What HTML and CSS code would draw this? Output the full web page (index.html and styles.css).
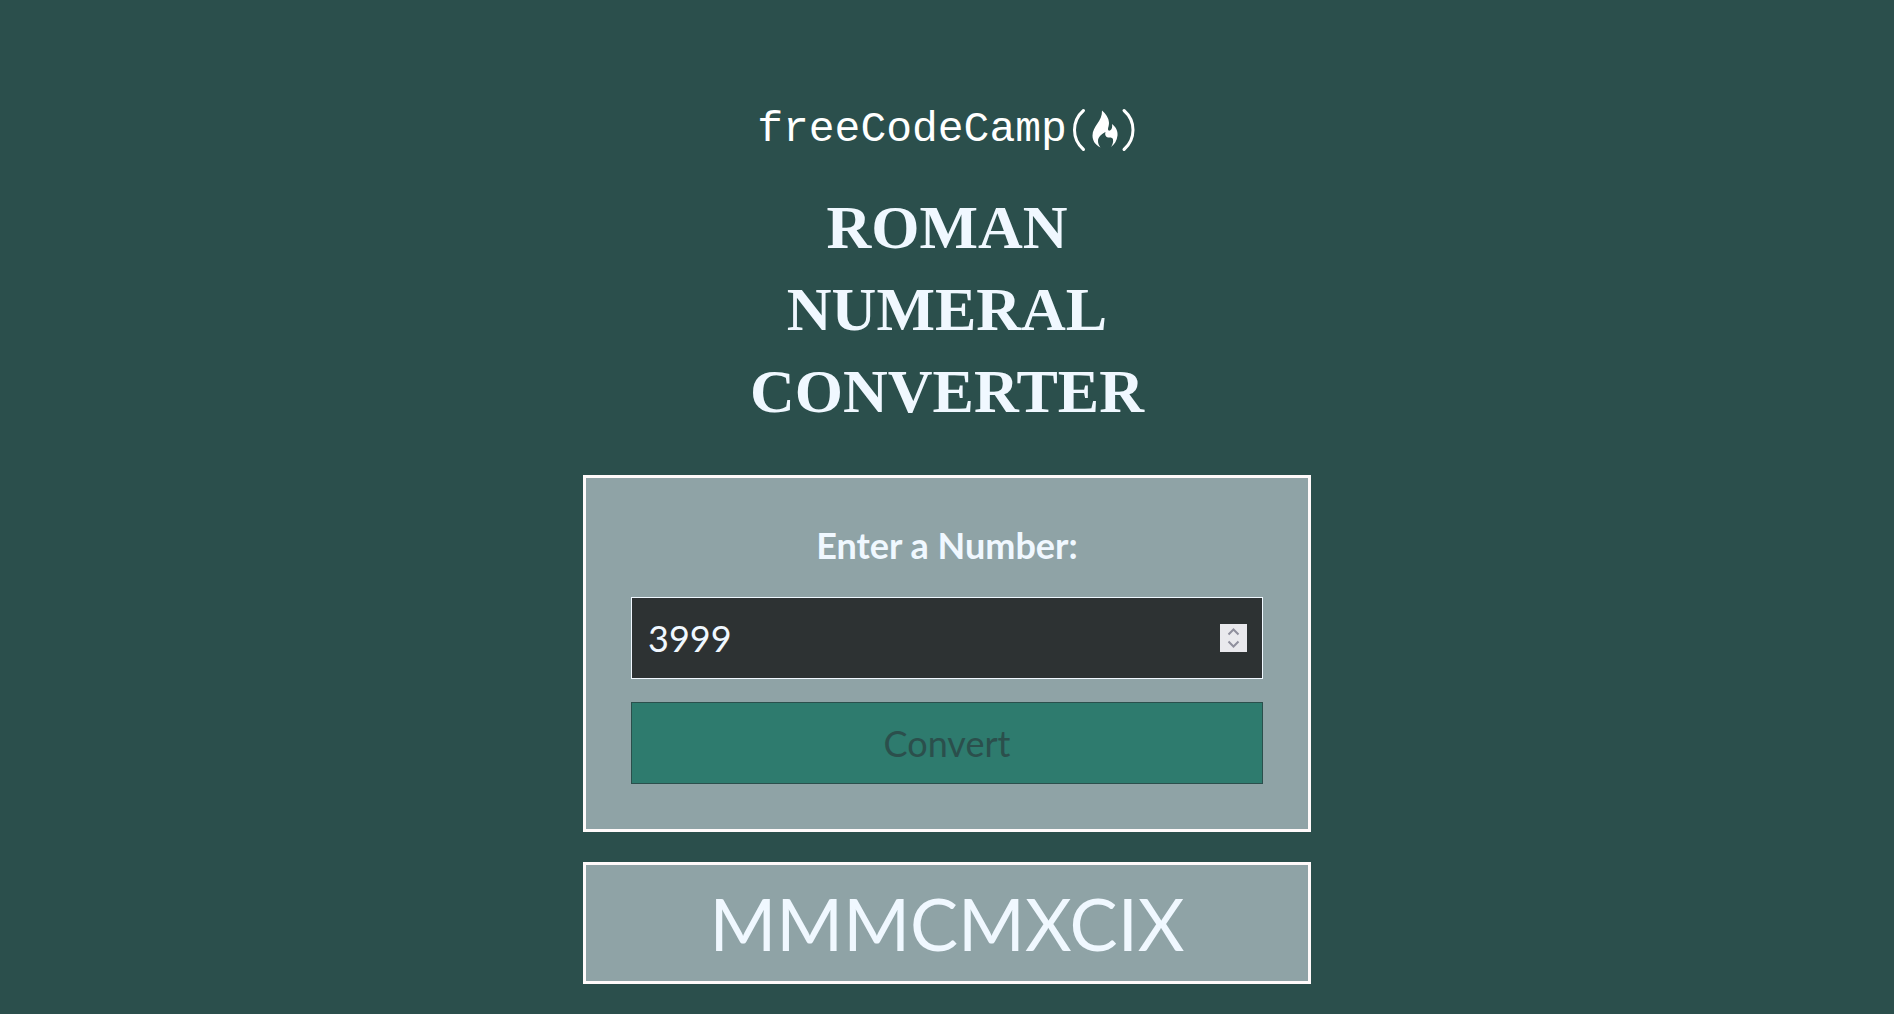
FILE: index.html
```html
<!DOCTYPE html>
<html lang="en">
<head>
<meta charset="utf-8">
<meta name="viewport" content="width=device-width, initial-scale=1">
<title>Roman Numeral Converter</title>
<link rel="stylesheet" href="styles.css">
</head>
<body>
<main class="page">
  <div class="logo">
    <span class="logo-text">freeCodeCamp</span>
    <svg class="logo-mark" viewBox="0 0 66 46" aria-hidden="true">
      <path class="bracket" d="M12.500 3.500C.5 14 .5 32 12.500 42.500M53 3.500c12 10.500 12 28.500 0 39"/>
      <path class="flame" d="M31 3.500c3.500 3 7 7.500 7 12.500 0 2.500-1 4.500-1 6 0 1.300.8 2 2 1.500 2-.8 2.500-3.500 2-6.500 4 3 6 7 5.500 11.500-.5 5-3 9-6.500 11.500 1.500-2.500 2.500-5 2-7.500-.3-1.500-1.500-2-3.500-2-3.500 0-5-2-4-5.500-4 2-7.500 5-7.500 9 0 2.500 1 4.500 2.500 6.500-5-2.500-8-6.500-8-12 0-9.500 10-14 9.500-25z"/>
    </svg>
  </div>
  <h1 class="title">Roman<br>Numeral<br>Converter</h1>
  <form class="panel form">
    <label class="label" for="number">Enter a Number:</label>
    <div class="field">
      <input class="control number" id="number" type="number" value="3999">
      <span class="stepper" aria-hidden="true">
        <svg class="arrows" viewBox="0 0 27 28"><path d="M8.500 10.500l5-5 5 5M8.500 17.500l5 5 5-5"/></svg>
      </span>
    </div>
    <button class="control convert" type="button">Convert</button>
  </form>
  <output class="panel result" for="number">MMMCMXCIX</output>
</main>
</body>
</html>
```
FILE: styles.css
```css
* {
  box-sizing: border-box;
}

body {
  margin: 0;
  background: #2b4f4c;
  color: #f0f8ff;
  font-family: Lato, sans-serif;
  font-size: 36px;
  line-height: 44px;
}

.page {
  display: flex;
  flex-direction: column;
  align-items: center;
  padding: 102px 20px 30px;
}

.logo {
  display: flex;
  align-items: center;
  gap: 4px;
  height: 56px;
  color: #fff;
}

.logo-text {
  font-family: "Liberation Mono", monospace;
  font-size: 43px;
}

.logo-mark {
  width: 66px;
  height: 46px;
}

.bracket {
  fill: none;
  stroke: currentColor;
  stroke-width: 3;
  stroke-linecap: round;
}

.flame {
  fill: currentColor;
}

.title {
  margin: 28px 0 43px;
  font-family: "Liberation Serif", serif;
  font-size: 62px;
  line-height: 82px;
  text-align: center;
  text-transform: uppercase;
}

.panel {
  width: 100%;
  max-width: 728px;
  border: 3px solid #fffafa;
  background: #8fa3a6;
  text-align: center;
}

.form {
  display: flex;
  flex-direction: column;
  margin-bottom: 30px;
  padding: 45px;
}

.label {
  margin-bottom: 30px;
  font-weight: 700;
}

.field {
  position: relative;
  display: flex;
  margin-bottom: 23px;
}

.control {
  width: 100%;
  height: 82px;
  border: 1px solid #f0f8ff;
  border-radius: 0;
  padding: 16px;
  font: inherit;
}

.number {
  background: #2d3233;
  color: #f0f8ff;
  appearance: textfield;
}

.number::-webkit-inner-spin-button {
  appearance: none;
}

.stepper {
  position: absolute;
  top: 27px;
  right: 16px;
  display: flex;
  background: #e9e9ed;
}

.arrows {
  width: 27px;
  height: 28px;
  fill: none;
  stroke: #8f8f9d;
  stroke-width: 2;
}

.convert {
  border-color: #2b4f4c;
  background: #2e7b6e;
  color: #2b4f4c;
}

.result {
  display: block;
  padding: 14px;
  font-size: 72px;
  line-height: 88px;
}
```
